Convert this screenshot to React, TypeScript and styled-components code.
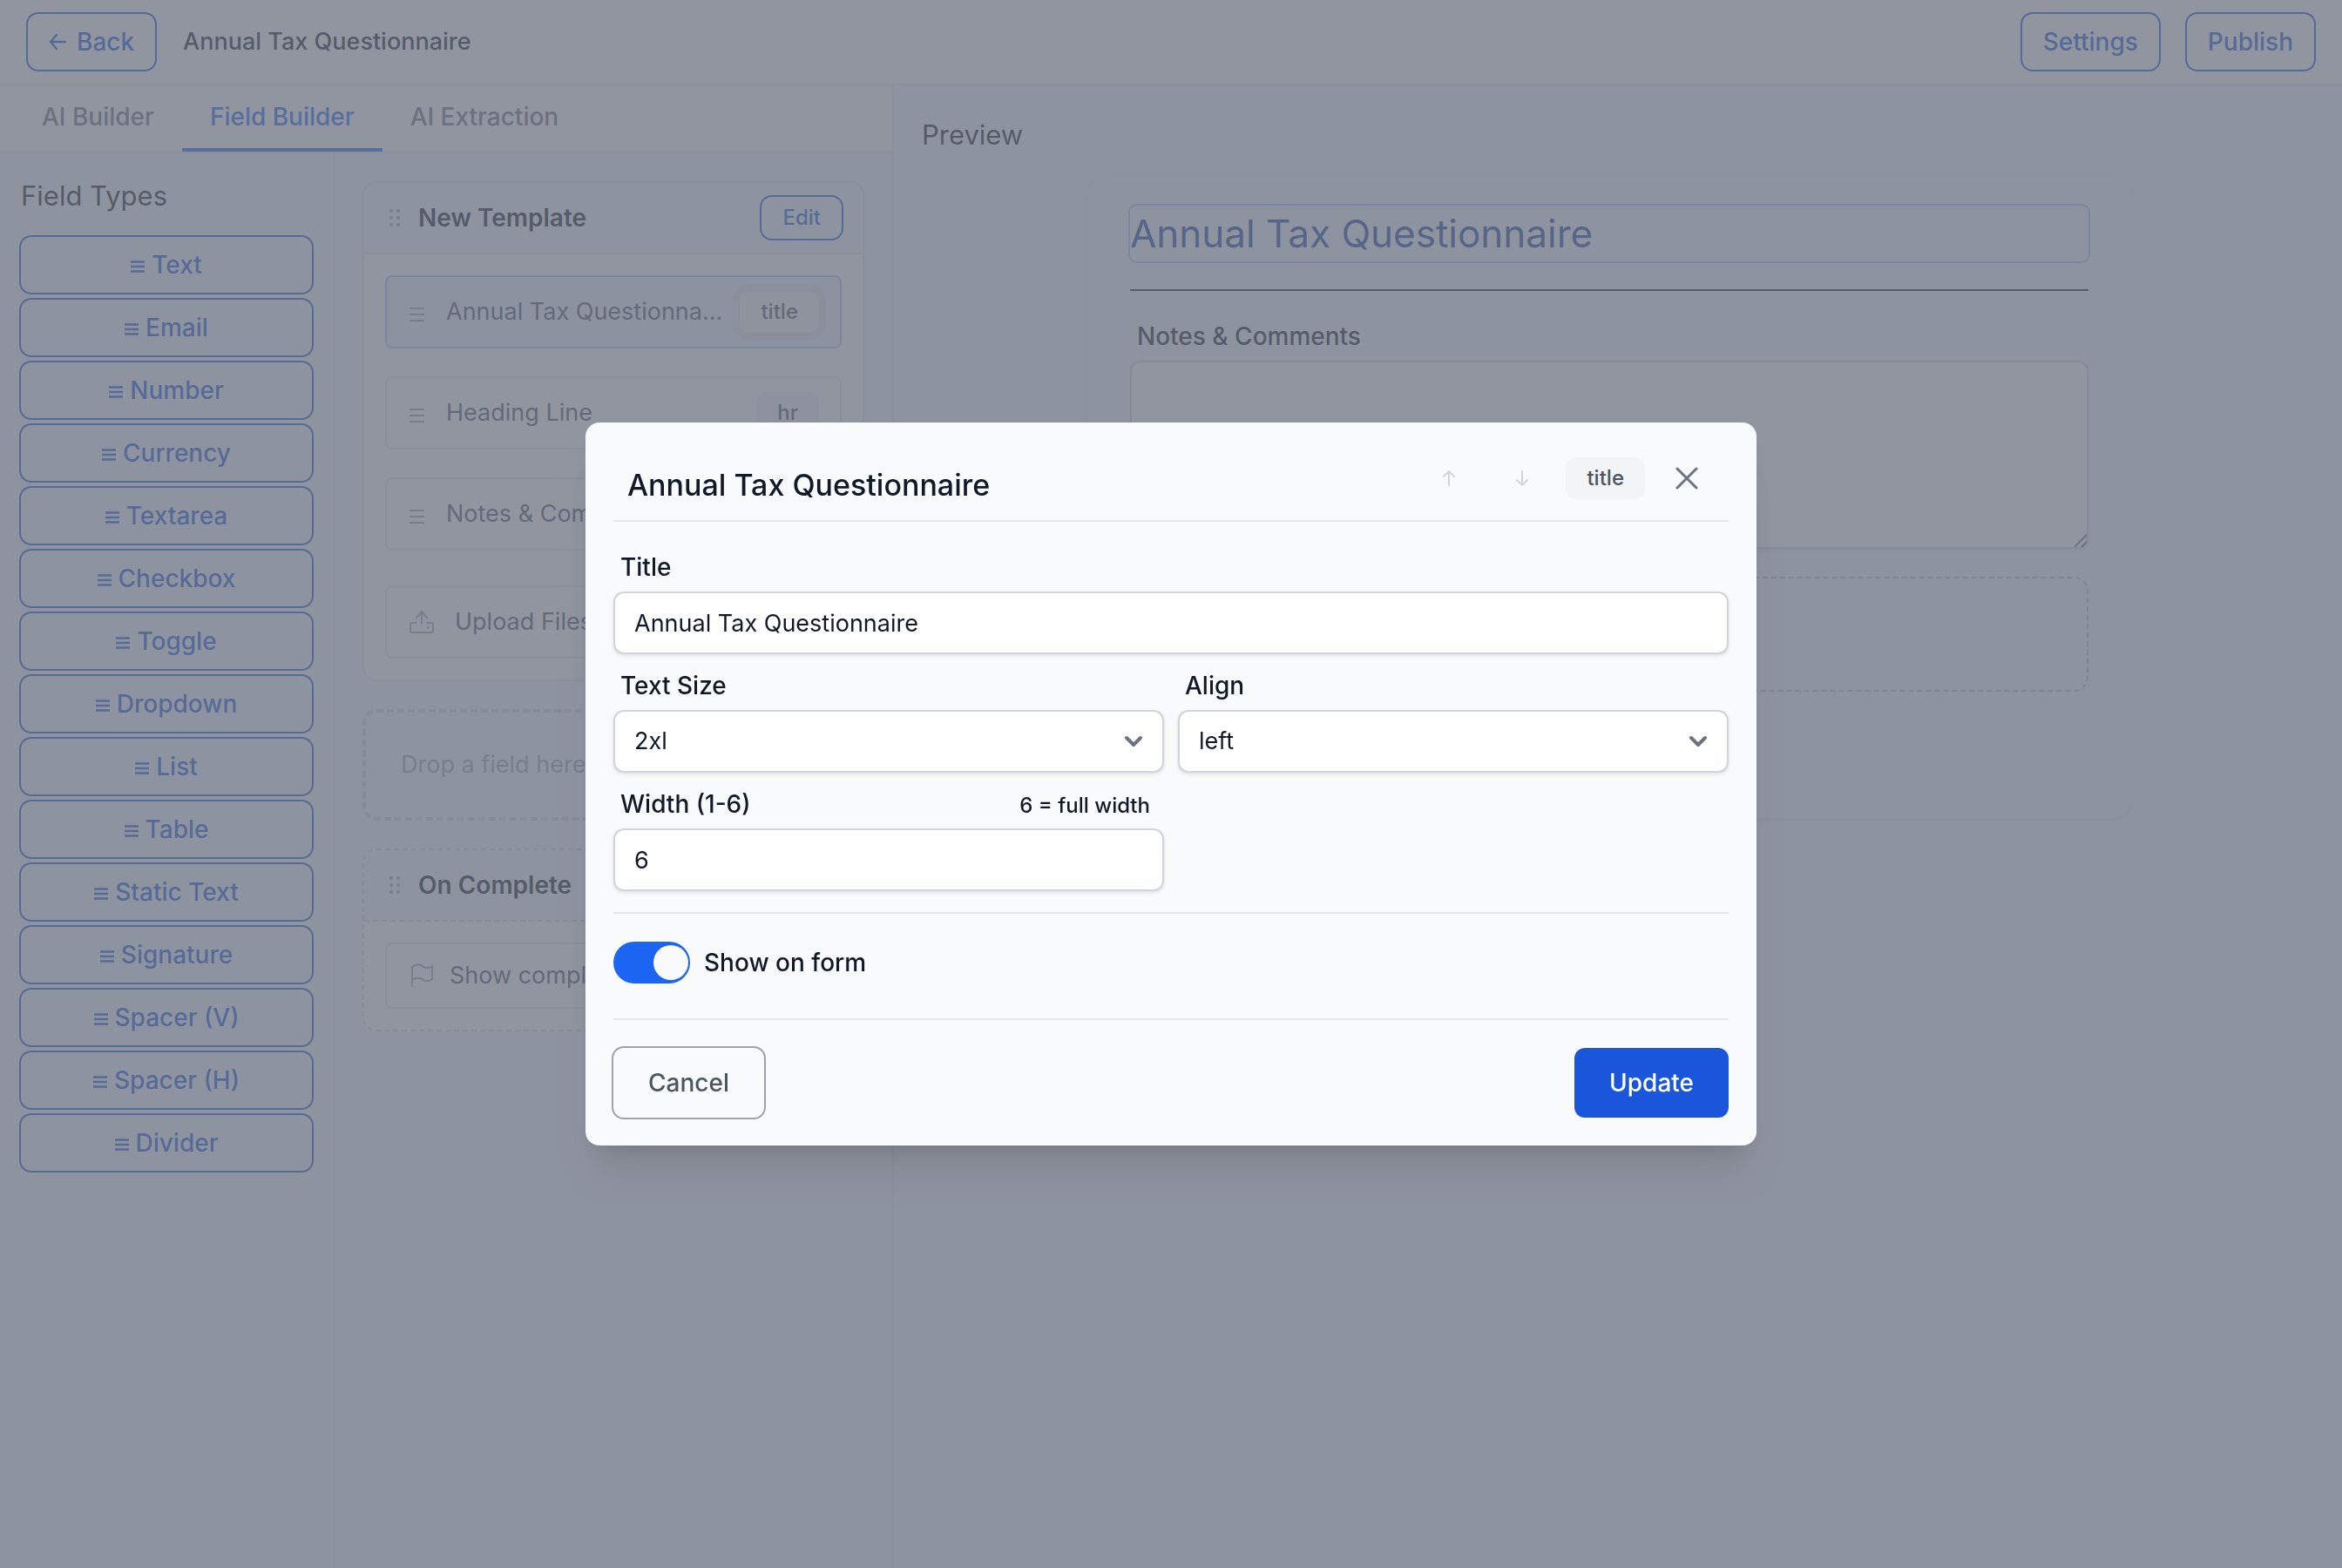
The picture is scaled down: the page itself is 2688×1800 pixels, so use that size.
import React from "react";
import styled, { createGlobalStyle, css } from "styled-components";

const color = {
  surface: "#ffffff",
  page: "#f8fafc",
  ink: "#111928",
  body: "#4b5563",
  muted: "#6b7280",
  faint: "#9ca3af",
  line: "#e5e7eb",
  field: "#d1d5db",
  chip: "#f3f4f6",
  blue: "#1a56db",
  blueBright: "#1c64f2",
  blueSoft: "#a4cafe",
  blueWash: "#eff4ff",
  blueDeep: "#1e429f",
};

const GlobalStyle = createGlobalStyle`
  *, *::before, *::after { box-sizing: border-box; }
  body {
    margin: 0;
    background: ${color.page};
    color: ${color.ink};
    font-family: Inter, "Liberation Sans", Arial, sans-serif;
    font-size: 28px;
    line-height: 40px;
  }
  h1, h2, h3, p, ul { margin: 0; padding: 0; font-weight: 400; }
  button, input, select, textarea { font: inherit; color: inherit; margin: 0; }
  button { cursor: pointer; }
`;

/* ---------- shared controls ---------- */

const OutlineButton = styled.button<{ $small?: boolean; $block?: boolean }>`
  display: flex;
  align-items: center;
  justify-content: center;
  gap: ${(p) => (p.$block ? 8 : 12)}px;
  width: ${(p) => (p.$block ? "100%" : "auto")};
  height: ${(p) => (p.$small ? 48 : 64)}px;
  padding: 0 24px;
  border: 0;
  border-radius: 12px;
  background: transparent;
  box-shadow: 0 0 0 2px ${color.blue};
  color: ${color.blue};
  font-size: ${(p) => (p.$small ? 24 : 28)}px;
  font-weight: 500;
`;

const Chip = styled.span<{ $ring?: boolean }>`
  flex: none;
  padding: 4px 24px;
  border-radius: 12px;
  background: ${color.chip};
  color: ${color.body};
  font-size: 24px;
  font-weight: 500;
  ${(p) =>
    p.$ring &&
    css`
      background: #f7f7f8;
      box-shadow: 0 0 0 8px ${color.line};
    `}
`;

/* ---------- page frame ---------- */

const Page = styled.div`
  display: flex;
  flex-direction: column;
  min-height: 100vh;
`;

const TopBar = styled.header`
  display: flex;
  align-items: center;
  gap: 32px;
  padding: 16px 32px;
  background: ${color.surface};
  border-bottom: 2px solid ${color.line};
`;

const DocTitle = styled.h1`
  flex: 1;
  font-size: 27px;
  font-weight: 500;
`;

const Columns = styled.div`
  flex: 1;
  display: grid;
  grid-template-columns: 1026px 1fr;
`;

const Builder = styled.div`
  display: flex;
  flex-direction: column;
  border-right: 2px solid ${color.line};
`;

const Tabs = styled.nav`
  display: flex;
  padding-left: 16px;
  background: ${color.surface};
  border-bottom: 2px solid ${color.line};
`;

const Tab = styled.button<{ $active?: boolean }>`
  padding: 16px 32px;
  border: 0;
  border-bottom: 4px solid ${(p) => (p.$active ? color.blueBright : "transparent")};
  background: none;
  color: ${(p) => (p.$active ? color.blueBright : color.muted)};
  font-weight: 500;
`;

const BuilderBody = styled.div`
  flex: 1;
  display: grid;
  grid-template-columns: 384px 1fr;
`;

const Palette = styled.aside`
  display: flex;
  flex-direction: column;
  gap: 22px;
  padding: 24px;
  border-right: 2px solid ${color.line};
`;

const PaneHeading = styled.h2`
  font-size: 31px;
  line-height: 50px;
`;

const TypeList = styled.ul`
  display: flex;
  flex-direction: column;
  gap: 8px;
  list-style: none;
`;

const Outline = styled.section`
  display: flex;
  flex-direction: column;
  gap: 32px;
  padding: 32px;
  min-width: 0;
`;

const Section = styled.article<{ $dashed?: boolean }>`
  border: 2px ${(p) => (p.$dashed ? "dashed" : "solid")} ${(p) => (p.$dashed ? color.field : color.line)};
  border-radius: 16px;
  background: ${color.surface};
  overflow: hidden;
`;

const SectionHead = styled.div<{ $dashed?: boolean }>`
  display: flex;
  align-items: center;
  gap: 20px;
  height: 82px;
  padding: 0 24px 0 28px;
  background: ${color.page};
  border-bottom: 2px ${(p) => (p.$dashed ? "dashed" : "solid")} ${(p) => (p.$dashed ? color.field : color.line)};
`;

const SectionTitle = styled.h3`
  flex: 1;
  font-size: 28px;
  font-weight: 600;
`;

const Items = styled.div`
  display: flex;
  flex-direction: column;
  gap: 40px;
  padding: 24px;
`;

const FieldStack = styled.div`
  display: flex;
  flex-direction: column;
  gap: 32px;
`;

const Item = styled.div<{ $selected?: boolean; $compact?: boolean }>`
  display: flex;
  align-items: center;
  height: ${(p) => (p.$compact ? 76 : 84)}px;
  padding: 0 24px 0 26px;
  border: 2px solid ${(p) => (p.$selected ? color.blueSoft : color.line)};
  border-radius: 8px;
  background: ${(p) => (p.$selected ? color.blueWash : color.surface)};
  color: ${color.body};
  font-size: 27px;
`;

const ItemIcon = styled.span<{ $gap: number }>`
  display: flex;
  flex: none;
  margin-right: ${(p) => p.$gap}px;
  color: ${color.faint};
`;

const ItemName = styled.span`
  flex: 1;
  min-width: 0;
  margin-right: 16px;
  overflow: hidden;
  white-space: nowrap;
  text-overflow: ellipsis;
`;

const DropZone = styled.div`
  display: flex;
  align-items: center;
  height: 128px;
  padding: 0 40px;
  border: 4px dashed ${color.field};
  border-radius: 16px;
  color: ${color.faint};
  font-size: 27px;
`;

/* ---------- preview ---------- */

const Preview = styled.main`
  display: flex;
  flex-direction: column;
  gap: 22px;
  padding: 32px 52px 32px 32px;
`;

const Sheet = styled.section`
  align-self: center;
  display: flex;
  flex-direction: column;
  gap: 32px;
  width: 100%;
  max-width: 1200px;
  padding: 32px 48px 144px;
  border: 2px solid ${color.chip};
  border-radius: 24px;
  background: ${color.page};
  box-shadow: 0 2px 6px rgba(0, 0, 0, 0.1);
`;

const SheetTitle = styled.h2`
  border-radius: 8px;
  box-shadow: 0 0 0 2px ${color.blueSoft};
  color: ${color.blueDeep};
  font-size: 44px;
  line-height: 64px;
`;

const SheetRule = styled.hr`
  width: 100%;
  margin: 0;
  border: 0;
  border-top: 2px solid ${color.ink};
`;

const SheetUpload = styled.div`
  height: 132px;
  border: 2px dashed #b8bcc4;
  border-radius: 16px;
`;

/* ---------- form parts ---------- */

const Field = styled.div`
  display: flex;
  flex-direction: column;
  gap: 8px;
`;

const LabelRow = styled.div`
  display: flex;
  align-items: baseline;
  justify-content: space-between;
  height: 40px;
  padding: 0 16px 0 8px;
  font-weight: 500;
`;

const Hint = styled.span`
  font-size: 24px;
`;

const control = css`
  display: block;
  width: 100%;
  border: 2px solid ${color.field};
  border-radius: 12px;
  background: ${color.surface};
  box-shadow: 0 2px 4px rgba(0, 0, 0, 0.1);
  font-size: 27px;
  outline: none;
`;

const TextInput = styled.input`
  ${control}
  height: 72px;
  padding: 0 22px;
`;

const ResizeFrame = styled.div`
  position: relative;
  svg {
    position: absolute;
    right: 2px;
    bottom: 2px;
    color: ${color.muted};
    pointer-events: none;
  }
`;

const TextArea = styled.textarea`
  ${control}
  height: 216px;
  padding: 16px 22px;
  resize: vertical;
  &::-webkit-resizer {
    background: transparent;
  }
`;

const SelectWrap = styled.div`
  position: relative;
  svg {
    position: absolute;
    right: 22px;
    top: 28px;
    pointer-events: none;
  }
`;

const Select = styled.select`
  ${control}
  height: 72px;
  padding: 0 64px 0 22px;
  appearance: none;
`;

/* ---------- dialog ---------- */

const Backdrop = styled.div`
  position: fixed;
  inset: 0;
  display: flex;
  align-items: center;
  justify-content: center;
  background: rgba(107, 114, 128, 0.75);
`;

const Dialog = styled.form`
  width: 50%;
  min-width: 960px;
  padding: 32px;
  border-radius: 16px;
  background: ${color.page};
  box-shadow: 0 40px 50px -10px rgba(0, 0, 0, 0.1), 0 16px 20px -12px rgba(0, 0, 0, 0.1);
`;

const DialogHead = styled.div`
  display: flex;
  align-items: center;
  height: 82px;
  padding-left: 16px;
  border-bottom: 2px solid ${color.line};
`;

const DialogTitle = styled.h2`
  flex: 1;
  align-self: flex-end;
  padding-bottom: 20px;
  font-size: 34px;
  font-weight: 500;
  line-height: 40px;
`;

const DialogTools = styled.div`
  display: flex;
  align-items: center;
  align-self: flex-start;
  height: 64px;
`;

const MoveButtons = styled.div`
  display: flex;
  margin-right: 8px;
`;

const IconButton = styled.button<{ $width: number }>`
  display: flex;
  align-items: center;
  justify-content: center;
  width: ${(p) => p.$width}px;
  height: 64px;
  padding: 0;
  border: 0;
  background: none;
  color: ${color.muted};
  &:disabled {
    color: ${color.field};
  }
`;

const DialogFields = styled.div`
  display: grid;
  grid-template-columns: 1fr 1fr;
  gap: 16px;
  padding: 32px 0 24px;
  border-bottom: 2px solid ${color.line};
`;

const WideField = styled(Field)`
  grid-column: 1 / -1;
`;

const SwitchRow = styled.div`
  display: flex;
  align-items: center;
  gap: 16px;
  padding: 32px 0 40px;
  border-bottom: 2px solid ${color.line};
  font-weight: 500;
`;

const Switch = styled.input`
  appearance: none;
  display: flex;
  width: 88px;
  height: 48px;
  padding: 4px 2px;
  border-radius: 24px;
  background: ${color.field};
  &::before {
    content: "";
    width: 40px;
    height: 40px;
    border-radius: 50%;
    background: ${color.page};
  }
  &:checked {
    justify-content: flex-end;
    background: ${color.blueBright};
  }
`;

const DialogFoot = styled.div`
  display: flex;
  justify-content: space-between;
  padding-top: 32px;
`;

const FootButton = styled.button<{ $primary?: boolean }>`
  height: 80px;
  padding: 0 40px;
  border: 0;
  border-radius: 12px;
  background: ${(p) => (p.$primary ? color.blue : "transparent")};
  box-shadow: ${(p) => (p.$primary ? "none" : `0 0 0 2px ${color.faint}`)};
  color: ${(p) => (p.$primary ? color.surface : color.body)};
  font-weight: 500;
`;

/* ---------- icons ---------- */

type StrokeProps = { w: number; h: number; d: string; stroke?: number; round?: boolean };

const Stroke = ({ w, h, d, stroke = 2, round = true }: StrokeProps) => (
  <svg
    width={w}
    height={h}
    viewBox={`0 0 ${w} ${h}`}
    fill="none"
    stroke="currentColor"
    strokeWidth={stroke}
    strokeLinecap={round ? "round" : "butt"}
    strokeLinejoin="round"
    aria-hidden="true"
  >
    <path d={d} />
  </svg>
);

const TypeIcon = () => <Stroke w={16} h={18} stroke={2.5} round={false} d="M0 5.500h16M0 11h16M0 16.500h16" />;
const RowIcon = () => <Stroke w={18} h={24} round={false} d="M0 8h17M0 15h17M0 22h17" />;
const BackIcon = () => <Stroke w={20} h={20} stroke={2.5} d="M9 2L2 10l7 8M2 10h17" />;
const ArrowUp = () => <Stroke w={16} h={18} d="M8 17V1M2 7l6-6 6 6" />;
const ArrowDown = () => <Stroke w={16} h={18} d="M8 1v16M2 11l6 6 6-6" />;
const CloseIcon = () => <Stroke w={26} h={26} stroke={3} d="M2 2l22 22M24 2L2 24" />;
const ResizeGrip = () => <Stroke w={14} h={15} round={false} d="M0 15L14 1M8 15l6-6" />;
const Chevron = () => (
  <svg width="24" height="16" viewBox="0 0 24 16" fill="none" stroke={color.muted} strokeWidth="4" strokeLinecap="round" strokeLinejoin="round" aria-hidden="true">
    <path d="M3 4l8 8 8-8" />
  </svg>
);
const UploadIcon = () => (
  <Stroke w={28} h={28} d="M14 16V2M8 9l6-7 6 7M8 15H2q-1 0-1 1v9q0 1 1 1h24q1 0 1-1v-9q0-1-1-1h-6M21 20.500h1" />
);
const FlagIcon = () => (
  <Stroke w={28} h={28} d="M3 26V4c6-4 10-3 13 0 4 2 7 1 10-1v15c-4 3-7 3-10 1-4-3-8-3-13 0" />
);
const DragDots = () => (
  <svg width="14" height="20" viewBox="0 0 14 20" fill={color.faint} aria-hidden="true">
    {[2, 10, 18].map((y) => (
      <React.Fragment key={y}>
        <circle cx="3" cy={y} r="2" />
        <circle cx="11" cy={y} r="2" />
      </React.Fragment>
    ))}
  </svg>
);

/* ---------- data ---------- */

const fieldTypes = [
  "Text", "Email", "Number", "Currency", "Textarea", "Checkbox", "Toggle", "Dropdown",
  "List", "Table", "Static Text", "Signature", "Spacer (V)", "Spacer (H)", "Divider",
];

const templateFields = [
  { name: "Annual Tax Questionnaire", kind: "title", selected: true },
  { name: "Heading Line", kind: "hr", selected: false },
  { name: "Notes & Comments", kind: "textarea", selected: false },
];

export default function App() {
  return (
    <>
      <GlobalStyle />
      <Page>
        <TopBar>
          <OutlineButton type="button">
            <BackIcon />
            Back
          </OutlineButton>
          <DocTitle>Annual Tax Questionnaire</DocTitle>
          <OutlineButton type="button">Settings</OutlineButton>
          <OutlineButton type="button">Publish</OutlineButton>
        </TopBar>
        <Columns>
          <Builder>
            <Tabs>
              <Tab type="button">AI Builder</Tab>
              <Tab type="button" $active>Field Builder</Tab>
              <Tab type="button">AI Extraction</Tab>
            </Tabs>
            <BuilderBody>
              <Palette>
                <PaneHeading>Field Types</PaneHeading>
                <TypeList>
                  {fieldTypes.map((name) => (
                    <li key={name}>
                      <OutlineButton type="button" $block>
                        <TypeIcon />
                        {name}
                      </OutlineButton>
                    </li>
                  ))}
                </TypeList>
              </Palette>
              <Outline>
                <Section>
                  <SectionHead>
                    <DragDots />
                    <SectionTitle>New Template</SectionTitle>
                    <OutlineButton type="button" $small>Edit</OutlineButton>
                  </SectionHead>
                  <Items>
                    <FieldStack>
                      {templateFields.map((f) => (
                        <Item key={f.name} $selected={f.selected}>
                          <ItemIcon $gap={24}><RowIcon /></ItemIcon>
                          <ItemName>{f.name}</ItemName>
                          <Chip $ring={f.selected}>{f.kind}</Chip>
                        </Item>
                      ))}
                    </FieldStack>
                    <Item>
                      <ItemIcon $gap={24}><UploadIcon /></ItemIcon>
                      <ItemName>Upload Files</ItemName>
                    </Item>
                  </Items>
                </Section>
                <DropZone>Drop a field here</DropZone>
                <Section $dashed>
                  <SectionHead $dashed>
                    <DragDots />
                    <SectionTitle>On Complete</SectionTitle>
                  </SectionHead>
                  <Items>
                    <Item $compact>
                      <ItemIcon $gap={18}><FlagIcon /></ItemIcon>
                      <ItemName>Show completion</ItemName>
                    </Item>
                  </Items>
                </Section>
              </Outline>
            </BuilderBody>
          </Builder>
          <Preview>
            <PaneHeading>Preview</PaneHeading>
            <Sheet>
              <SheetTitle>Annual Tax Questionnaire</SheetTitle>
              <SheetRule />
              <Field>
                <LabelRow>
                  <label htmlFor="notes">Notes &amp; Comments</label>
                </LabelRow>
                <ResizeFrame>
                  <TextArea id="notes" />
                  <ResizeGrip />
                </ResizeFrame>
              </Field>
              <SheetUpload />
            </Sheet>
          </Preview>
        </Columns>
      </Page>
      <Backdrop>
        <Dialog role="dialog" aria-modal="true" aria-labelledby="dialog-title" onSubmit={(e) => e.preventDefault()}>
          <DialogHead>
            <DialogTitle id="dialog-title">Annual Tax Questionnaire</DialogTitle>
            <DialogTools>
              <MoveButtons>
                <IconButton type="button" $width={84} disabled aria-label="Move up"><ArrowUp /></IconButton>
                <IconButton type="button" $width={84} disabled aria-label="Move down"><ArrowDown /></IconButton>
              </MoveButtons>
              <Chip>title</Chip>
              <IconButton type="button" $width={96} aria-label="Close"><CloseIcon /></IconButton>
            </DialogTools>
          </DialogHead>
          <DialogFields>
            <WideField>
              <LabelRow><label htmlFor="title">Title</label></LabelRow>
              <TextInput id="title" defaultValue="Annual Tax Questionnaire" />
            </WideField>
            <Field>
              <LabelRow><label htmlFor="size">Text Size</label></LabelRow>
              <SelectWrap>
                <Select id="size" defaultValue="2xl">
                  <option>xl</option>
                  <option>2xl</option>
                </Select>
                <Chevron />
              </SelectWrap>
            </Field>
            <Field>
              <LabelRow><label htmlFor="align">Align</label></LabelRow>
              <SelectWrap>
                <Select id="align" defaultValue="left">
                  <option>left</option>
                  <option>center</option>
                </Select>
                <Chevron />
              </SelectWrap>
            </Field>
            <Field>
              <LabelRow>
                <label htmlFor="width">Width (1-6)</label>
                <Hint>6 = full width</Hint>
              </LabelRow>
              <TextInput id="width" inputMode="numeric" defaultValue="6" />
            </Field>
          </DialogFields>
          <SwitchRow>
            <Switch id="show" type="checkbox" defaultChecked />
            <label htmlFor="show">Show on form</label>
          </SwitchRow>
          <DialogFoot>
            <FootButton type="button">Cancel</FootButton>
            <FootButton type="submit" $primary>Update</FootButton>
          </DialogFoot>
        </Dialog>
      </Backdrop>
    </>
  );
}
